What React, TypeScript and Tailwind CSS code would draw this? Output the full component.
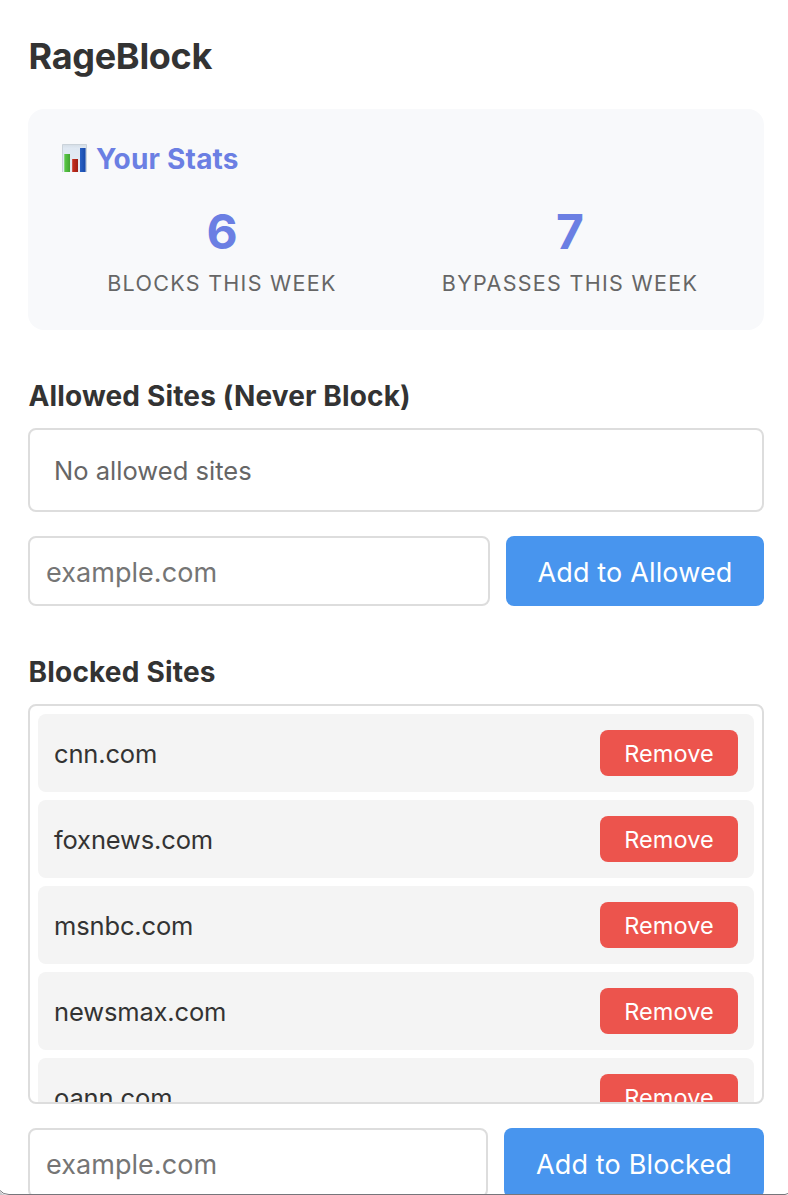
import React from "react";

const blockedSites = ["cnn.com", "foxnews.com", "msnbc.com", "newsmax.com", "oann.com"];

function ChartIcon() {
  return (
    <svg className="mb-[2px] h-7 w-[25px] shrink-0" viewBox="0 0 25 28" aria-hidden="true">
      <defs>
        <linearGradient id="sheet" x1="0" y1="0" x2="0" y2="1">
          <stop offset="0" stopColor="#d3dce4" />
          <stop offset="0.15" stopColor="#dfe8f2" />
          <stop offset="1" stopColor="#e6edf5" />
        </linearGradient>
        <linearGradient id="green" x1="0" y1="0" x2="1" y2="0">
          <stop offset="0" stopColor="#5ccb49" />
          <stop offset="1" stopColor="#43a532" />
        </linearGradient>
        <linearGradient id="red" x1="0" y1="0" x2="1" y2="0">
          <stop offset="0" stopColor="#c8301f" />
          <stop offset="1" stopColor="#9d2015" />
        </linearGradient>
        <linearGradient id="blue" x1="0" y1="0" x2="1" y2="0">
          <stop offset="0" stopColor="#2a62c6" />
          <stop offset="1" stopColor="#1748a8" />
        </linearGradient>
      </defs>
      <rect width="25" height="28" rx="1" fill="url(#sheet)" />
      <path d="M0.5 28V1Q0.5 0.5 1 0.5H24Q24.5 0.5 24.5 1V28" fill="none" stroke="#cbd3da" />
      <rect x="2.3" y="10" width="5.7" height="18" fill="url(#green)" />
      <rect x="10.2" y="15" width="5.8" height="13" fill="url(#red)" />
      <rect x="18" y="4" width="5.6" height="24" fill="url(#blue)" />
    </svg>
  );
}

function Stat({ value, label }: { value: string; label: string }) {
  return (
    <div className="flex flex-1 flex-col items-center">
      <div className="text-[48px] leading-[56px] font-bold text-[#6b7fe3]">{value}</div>
      <div className="mt-[10px] text-[21.5px] leading-[26px] tracking-[1.3px] whitespace-nowrap text-[#666] uppercase">
        {label}
      </div>
    </div>
  );
}

function AddRow({ action, buttonClass }: { action: string; buttonClass: string }) {
  return (
    <div className="mt-6 flex h-[70px] shrink-0 gap-4">
      <input
        type="text"
        placeholder="example.com"
        className="min-w-0 flex-1 rounded-lg border-2 border-[#ddd] bg-white px-4 pt-[6px] text-[27px] tracking-[0.05px] text-[#333] outline-none placeholder:text-[#757575]"
      />
      <button
        className={`shrink-0 rounded-lg bg-[#4895ee] pt-[6px] text-[27px] tracking-[0.15px] whitespace-nowrap text-white ${buttonClass}`}
      >
        {action}
      </button>
    </div>
  );
}

export default function App() {
  return (
    <div className="relative flex h-[1195px] w-[788px] flex-col overflow-hidden bg-white px-7 pr-6 font-[Inter,sans-serif] text-[#333]">
      <h1 className="mt-[34px] h-[44px] pl-[0.5px] text-[36px] leading-[44px] font-bold tracking-[-0.3px]">RageBlock</h1>

      <section className="mt-[31px] h-[220.5px] w-[736px] shrink-0 rounded-2xl bg-[#f8f9fb] px-[34px] pt-[32px]">
        <div className="flex h-9 items-center gap-[9px]">
          <ChartIcon />
          <h2 className="text-[28px] leading-9 font-bold tracking-[0.2px] text-[#6b7fe3]">Your Stats</h2>
        </div>
        <div className="mt-[27px] flex gap-7">
          <Stat value="6" label="Blocks this week" />
          <Stat value="7" label="Bypasses this week" />
        </div>
      </section>

      <section className="mt-[48px] flex w-[736px] shrink-0 flex-col">
        <h2 className="h-[36px] pl-[0.5px] text-[28px] leading-9 font-bold tracking-[0.15px]">
          Allowed Sites (Never Block)
        </h2>
        <div className="mt-[14px] flex h-[84px] items-center rounded-lg border-2 border-[#ddd] px-6 pt-[4px] text-[25.5px] tracking-[0.02px] text-[#666]">
          No allowed sites
        </div>
        <AddRow action="Add to Allowed" buttonClass="w-[258px]" />
      </section>

      <section className="mt-[48px] flex w-[736px] shrink-0 flex-col">
        <h2 className="h-[36px] pl-[0.5px] text-[28px] leading-9 font-bold tracking-[0.2px]">Blocked Sites</h2>
        <ul className="mt-[14px] flex h-[400px] flex-col gap-2 overflow-hidden rounded-lg border-2 border-[#ddd] p-2">
          {blockedSites.map((site) => (
            <li
              key={site}
              className="flex h-[78px] shrink-0 items-center justify-between rounded-lg bg-[#f4f4f4] px-4 text-[25.5px] tracking-[-0.15px]"
            >
              <span className="pt-[4px]">{site}</span>
              <button className="h-[46px] w-[138px] rounded-lg bg-[#ec544d] pt-[3px] text-[23.5px] tracking-[0.1px] text-white">
                Remove
              </button>
            </li>
          ))}
        </ul>
        <AddRow action="Add to Blocked" buttonClass="w-[260px]" />
      </section>

      <svg className="pointer-events-none absolute bottom-0 left-0 h-5 w-full" viewBox="0 0 788 20" aria-hidden="true">
        <path d="M0 15.5Q3 19.5 9 19.5H785L788 18.5" fill="none" stroke="#77757b" />
        <path d="M0 16.5Q2.5 19.5 6 20H0Z" fill="#c9c9cc" />
      </svg>
    </div>
  );
}
